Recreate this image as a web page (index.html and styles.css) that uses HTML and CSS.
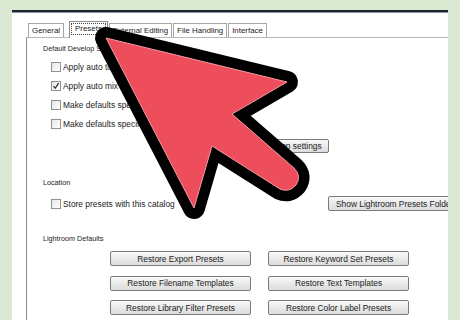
FILE: index.html
```html
<!DOCTYPE html>
<html lang="en">
<head>
    <meta charset="UTF-8">
    <meta name="viewport" content="width=device-width, initial-scale=1.0">
    <title>Preferences - Presets</title>
    <link rel="stylesheet" href="styles.css">
</head>
<body>
    <div class="window">
        <div class="tabs">
            <div class="tab">General</div>
            <div class="tab active"><span class="focus">Presets</span></div>
            <div class="tab">External Editing</div>
            <div class="tab">File Handling</div>
            <div class="tab">Interface</div>
        </div>

        <div class="pane">
            <div class="group-label first">Default Develop Settings</div>
            <div class="check-row"><span class="box"></span>Apply auto tone adjustments</div>
            <div class="check-row"><span class="box"><svg width="8" height="8" viewBox="0 0 8 8"><polyline points="1.5,4 3.2,6.3 6.6,1.2" fill="none" stroke="#222" stroke-width="1.2"/></svg></span>Apply auto mix when first converting to black and white</div>
            <div class="check-row"><span class="box"></span>Make defaults specific to camera serial number</div>
            <div class="check-row"><span class="box"></span>Make defaults specific to camera ISO setting</div>
            <button class="button reset">Reset all default Develop settings</button>

            <div class="group-label">Location</div>
            <div class="location-row">
                <div class="check-row wide"><span class="box"></span>Store presets with this catalog</div>
                <button class="button show">Show Lightroom Presets Folder...</button>
            </div>

            <div class="group-label">Lightroom Defaults</div>
            <div class="button-grid">
                <button class="button">Restore Export Presets</button>
                <button class="button">Restore Keyword Set Presets</button>
                <button class="button">Restore Filename Templates</button>
                <button class="button">Restore Text Templates</button>
                <button class="button">Restore Library Filter Presets</button>
                <button class="button">Restore Color Label Presets</button>
            </div>
        </div>
    </div>

    <!-- flecha encima de todo -->
    <svg class="arrow" width="460" height="320" viewBox="0 0 460 320">
        <path d="M106,38 L287,82 L232,114 L294,168 Q302,176 296,185 Q289,193 280,189 L212,146 L194,208 Z"
              fill="#000" stroke="#000" stroke-width="22" stroke-linejoin="round"/>
        <path d="M106,38 L287,82 L232,114 L294,168 Q302,176 296,185 Q289,193 280,189 L212,146 L194,208 Z"
              fill="#ee4e5c" stroke="#f49aa3" stroke-width="1" stroke-linejoin="round"/>
    </svg>
</body>
</html>
```

FILE: styles.css
```css
body {
    margin: 0;
    width: 460px;
    height: 320px;
    overflow: hidden;
    background-color: #dce9d2;
    font-family: "Liberation Sans", Arial, sans-serif;
    color: #1c1c1c;
}

.window {
    margin: 10px 0 0 12px;
    width: 436px;
    height: 310px;
    background: #fff;
    border-top: 2px solid #1d2533;
    box-shadow: inset 0 1px 0 #8a929c;
    padding-left: 14px;
    box-sizing: border-box;
    overflow: hidden;
}

.tabs {
    display: flex;
    align-items: flex-end;
    height: 16px;
    margin: 9px 0 0 2px;
    font-size: 7.9px;
}

.tab {
    height: 13px;
    line-height: 13px;
    padding: 0 3px;
    margin-right: 1px;
    border: 1px solid #a5a5a5;
    border-bottom: none;
    background: #fff;
    white-space: nowrap;
}

.tab.active {
    position: relative;
    height: 16px;
    line-height: 14px;
    margin: 0 1px -1px 4px;
    padding: 0 1px;
    border-color: #8c8c8c;
}

.focus {
    display: inline-block;
    line-height: 10px;
    padding: 0 3px;
    margin-top: 1px;
    border: 1px dotted #444;
}

.pane {
    width: 460px;
    height: 300px;
    border-top: 1px solid #b8b8b8;
    border-left: 1px solid #8d8d8d;
    padding-left: 16px;
    box-sizing: border-box;
}

.group-label {
    font-size: 7.2px;
    line-height: 12px;
    margin-top: 24px;
}
.group-label.first {
    margin-top: 5px;
}

.check-row {
    display: flex;
    align-items: center;
    height: 19px;
    padding-left: 8px;
    font-size: 8.4px;
    white-space: nowrap;
}
.group-label.first + .check-row {
    margin-top: 2px;
}

.box {
    display: flex;
    align-items: center;
    justify-content: center;
    width: 10px;
    height: 10px;
    margin-right: 2px;
    border: 1px solid #909090;
    background: linear-gradient(135deg, #e6e6e6, #fff);
    box-sizing: border-box;
    flex-shrink: 0;
}

.button {
    display: block;
    height: 15px;
    padding: 0 6px;
    border: 1px solid #7b7b7b;
    border-radius: 2px;
    background: linear-gradient(#fafafa, #e9e9e9 50%, #dcdcdc);
    font-family: inherit;
    font-size: 8.4px;
    color: #1c1c1c;
    white-space: nowrap;
    text-align: center;
}

.reset {
    width: 139px;
    height: 14px;
    margin: 6px 0 0 147px;
}

.location-row {
    display: flex;
    align-items: center;
    margin-top: 5px;
}
.check-row.wide {
    width: 277px;
    flex-shrink: 0;
}
.show {
    flex-shrink: 0;
    padding: 0 7px;
    text-align: left;
}

.location-row + .group-label {
    margin-top: 20px;
}

.button-grid {
    display: grid;
    grid-template-columns: 141px 141px;
    column-gap: 17px;
    row-gap: 9.5px;
    margin: 6px 0 0 67px;
}

.arrow {
    position: absolute;
    left: 0;
    top: 0;
}
```
